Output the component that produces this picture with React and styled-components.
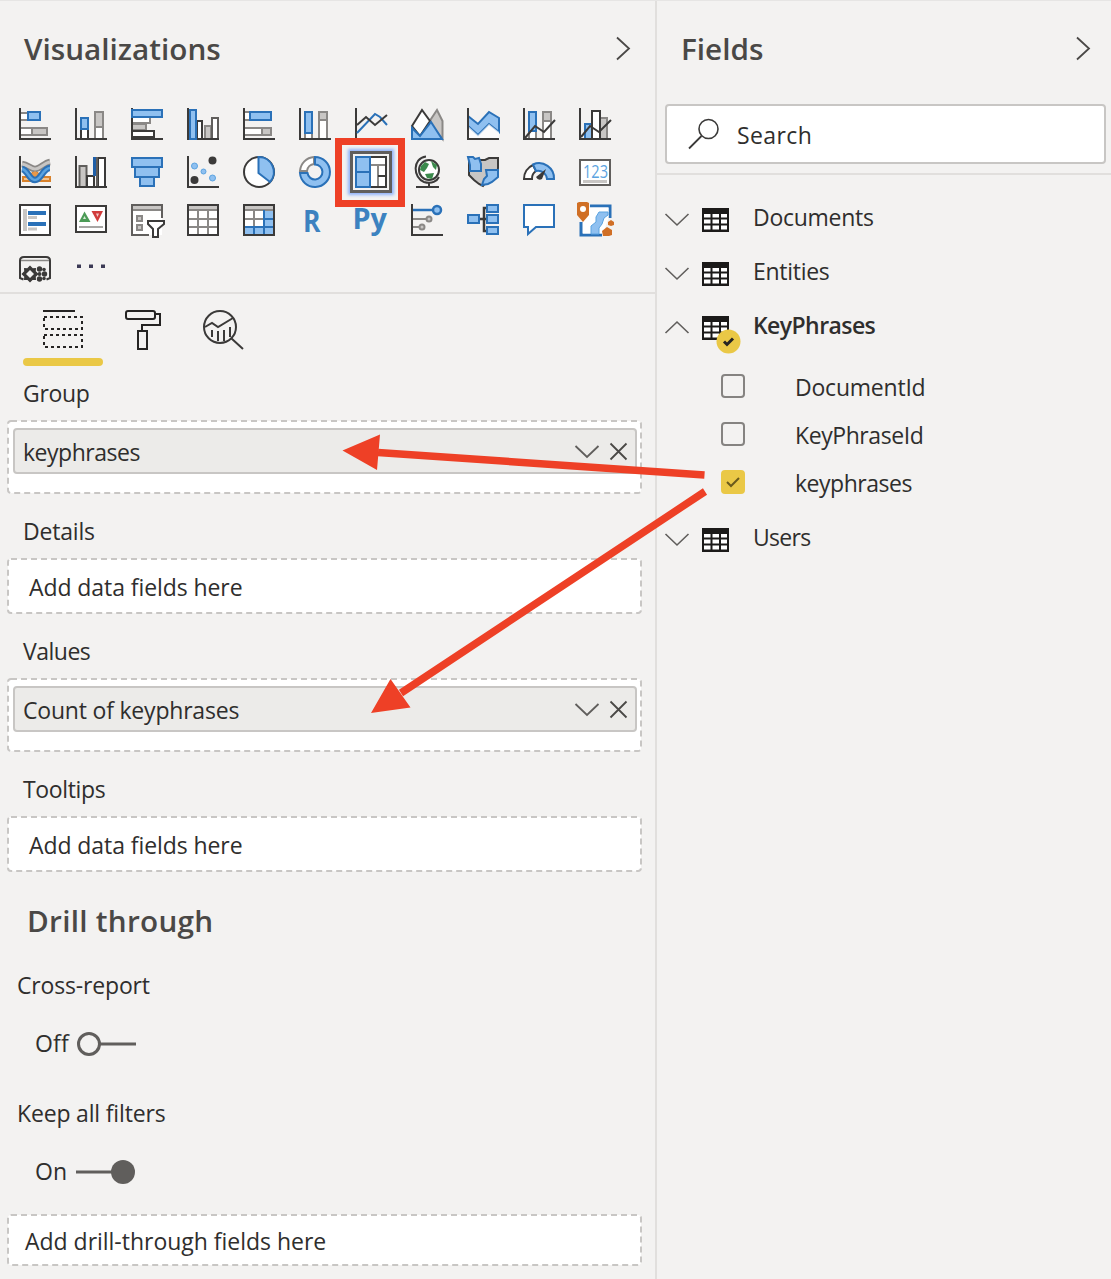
import React from "react";
import styled, { createGlobalStyle, css } from "styled-components";

const GlobalStyle = createGlobalStyle`
  * { box-sizing: border-box; }
  body { margin: 0; background: #f3f2f1; font-family: "Open Sans", "Noto Sans", sans-serif; color: #2f2e2d; }
`;

const Page = styled.div`
  position: relative;
  display: flex;
  width: 1111px;
  height: 1279px;
  overflow: hidden;
  background: #f3f2f1;
  border-top: 1px solid #e6e5e4;
`;
const VisualPanel = styled.section`
  width: 657px;
  margin-top: -1px;
  border-right: 2px solid #e1dfdd;
`;
const FieldPanel = styled.section`
  flex: 1;
  margin-top: -1px;
`;
const Header = styled.header`
  display: flex;
  align-items: center;
  justify-content: space-between;
  height: 98px;
  padding: 0 ${(p) => p.$right}px 0 24px;
`;
const Text = styled.span`
  font-size: 23px;
  line-height: 30px;
  white-space: nowrap;
  font-weight: ${(p) => (p.$bold ? 600 : 400)};
  letter-spacing: ${(p) => p.$ls || 0}px;
`;
const Title = styled.h2`
  margin: 0;
  font-size: 29.700px;
  line-height: 36px;
  font-weight: 600;
  color: #4a4846;
  white-space: nowrap;
  letter-spacing: ${(p) => p.$ls || 0}px;
`;
const Gallery = styled.div`
  display: grid;
  grid-template-columns: repeat(11, 32px);
  grid-auto-rows: 32px;
  gap: 16px 24px;
  padding: 10px 0 8px 19px;
  border-bottom: 2px solid #e1dfdd;
`;
const Cell = styled.div`
  position: relative;
  width: 32px;
  height: 32px;
`;
const IconSvg = styled.svg`
  display: block;
  flex: none;
  overflow: visible;
  fill: none;
`;
const SelectedFrame = styled.div`
  position: absolute;
  inset: -5px;
  border: 3px solid #605e5c;
  background: #f3f2f1;
  box-shadow: 0 0 3px 2px #8fb2fb;
`;
const Highlight = styled.div`
  position: absolute;
  left: -20px;
  top: -18px;
  width: 70px;
  height: 69px;
  border: 7px solid #ee4026;
`;
const Tabs = styled.nav`
  display: flex;
  height: 72px;
  padding-left: 23px;
`;
const Tab = styled.div`
  display: flex;
  justify-content: center;
  width: 80px;
  padding-top: 14px;
  position: relative;
  ${(p) => p.$active && css`
    &::after {
      content: "";
      position: absolute;
      left: 0; right: 0; bottom: 0;
      height: 8px;
      border-radius: 4px;
      background: #eac846;
    }
  `}
`;
const WellLabel = styled.div`
  display: flex;
  align-items: center;
  height: ${(p) => (p.$first ? 54 : 64)}px;
  padding: ${(p) => (p.$first ? 0 : 10)}px 0 0 23px;
`;
const Dashes = styled.rect`
  fill: #fff;
  stroke: #c8c6c4;
  stroke-width: 2;
  stroke-dasharray: 6 4;
`;
const Well = styled.div`
  position: relative;
  width: 635px;
  height: ${(p) => p.$h}px;
  margin-left: 7px;
  padding: ${(p) => (p.$filled ? "8px 5px 0 6px" : `2px 0 0 ${p.$indent}px`)};
  display: flex;
  align-items: ${(p) => (p.$filled ? "flex-start" : "center")};
`;
const WellBorder = styled.svg`
  position: absolute;
  inset: 0;
`;
const Pill = styled.div`
  position: relative;
  display: flex;
  align-items: center;
  flex: 1;
  height: 46px;
  padding: 1px 8px 0 8px;
  background: #ecebe9;
  border: 2px solid #c8c6c4;
  border-radius: 4px;
`;
const PillActions = styled.div`
  display: flex;
  align-items: center;
  gap: 11px;
  margin-left: auto;
`;
const Above = styled.div`
  position: relative;
  display: flex;
`;
const DrillHeading = styled.div`
  display: flex;
  align-items: center;
  height: 98px;
  padding-left: 27px;
`;
const OptionLabel = styled.div`
  display: flex;
  height: 30px;
  padding-left: 17px;
  margin-top: ${(p) => p.$gap || 0}px;
`;
const ToggleRow = styled.div`
  display: flex;
  align-items: center;
  height: 86px;
  padding-left: 35px;
`;
const ToggleText = styled.div`
  display: flex;
  width: 41px;
`;
const ToggleMark = styled.div`
  display: flex;
  padding-top: 1px;
`;
const SearchBox = styled.div`
  display: flex;
  align-items: center;
  height: 60px;
  margin: 6px 5px 9px 8px;
  padding-left: 20px;
  gap: 18px;
  background: #fff;
  border: 2px solid #c8c6c4;
  border-radius: 4px;
`;
const SearchText = styled.div`
  display: flex;
  padding-top: 2px;
`;
const Tree = styled.div`
  border-top: 2px solid #e1dfdd;
  padding-top: 15px;
`;
const TreeRow = styled.div`
  display: flex;
  align-items: center;
  height: 54px;
  padding-left: 8px;
`;
const TreeIcon = styled.div`
  position: relative;
  display: flex;
  width: 28px;
  margin: 6px 23px 0 13px;
`;
const Chev = styled.div`
  display: flex;
  padding-top: 4px;
`;
const Badge = styled.svg`
  position: absolute;
  left: 14px;
  top: 13px;
`;
const Children = styled.div`
  padding: 11px 0 3px;
`;
const ChildRow = styled.label`
  display: flex;
  align-items: center;
  height: 48px;
  padding-left: 64px;
`;
const Box = styled.span`
  display: flex;
  align-items: center;
  justify-content: center;
  width: 24px;
  height: 24px;
  margin: -2px 50px 0 0;
  border-radius: 4px;
  border: 2px solid ${(p) => (p.$on ? "#eac846" : "#858381")};
  background: ${(p) => (p.$on ? "#eac846" : "transparent")};
`;
const Arrows = styled.svg`
  position: absolute;
  left: 0;
  top: -1px;
  pointer-events: none;
`;

const D = "#3b3a39", G = "#8a8886", LG = "#c8c6c4", B = "#2a71b8", LB = "#8fc0f0", O = "#d8812a";
const R = ({ x, y, w, h, f = "#fff", s = D, sw = 2 }) => (
  <rect x={x} y={y} width={w} height={h} fill={f} stroke={s} strokeWidth={sw} />
);
const Axes = () => <path d="M1 0V31H32" stroke={D} strokeWidth="2" />;
const L = ({ d, s = D, w = 2, f = "none" }) => <path d={d} stroke={s} strokeWidth={w} fill={f} />;

const icons = [
  <><R x={1} y={5} w={8} h={7} s={G} /><R x={9} y={4} w={12} h={8} f={LB} s={B} /><R x={1} y={20} w={12} h={7} s={G} /><R x={13} y={20} w={15} h={7} f={LG} s={G} /><Axes /></>,
  <><R x={6} y={21} w={7} h={10} /><R x={6} y={10} w={7} h={11} f={LB} s={B} /><R x={20} y={18} w={8} h={13} s={G} /><R x={20} y={4} w={8} h={15} f={LG} s={G} /><Axes /></>,
  <><R x={1} y={9} w={18} h={6} s={G} /><R x={1} y={16} w={14} h={6} f={LG} s={G} /><R x={1} y={23} w={22} h={6} /><Axes /><R x={1} y={2} w={30} h={7} f={LB} s={B} /></>,
  <><R x={10} y={13} w={5} h={18} /><R x={18} y={18} w={6} h={13} f={LG} s={G} /><R x={25} y={10} w={6} h={21} s="#605e5c" /><Axes /><R x={3} y={2} w={6} h={29} f={LB} s={B} /></>,
  <><R x={1} y={4} w={7} h={8} s={G} /><R x={7} y={4} w={21} h={8} f={LB} s={B} /><R x={1} y={20} w={18} h={7} s={G} /><R x={19} y={20} w={9} h={7} f={LG} s={G} /><Axes /></>,
  <><R x={6} y={25} w={7} h={6} s={G} /><R x={6} y={4} w={7} h={21} f={LB} s={B} /><R x={20} y={12} w={8} h={19} s={G} /><R x={20} y={4} w={8} h={8} f={LG} s={G} /><Axes /></>,
  <><Axes /><L s={B} d="M2 25L20 6L25 9L32 17" /><L d="M2 17L11 9L20 17L32 7" /></>,
  <><L s={G} f={LG} d="M18 14L26 2L31.500 13V31L18 15Z" /><L f="#fff" d="M1 18L11 2L19 13L9 28Z" /><L s={B} f={LB} d="M1 20L9 28L20 14L31 31H1Z" /></>,
  <><L s={B} f={LB} d="M1 8L11 16L22 4L32 10V24L22 16L11 27L1 18Z" /><path d="M1 18L11 27L22 16L32 24V31H1Z" fill="#fff" opacity=".7" /><Axes /></>,
  <><R x={6} y={20} w={7} h={11} s={G} /><R x={6} y={4} w={7} h={19} f={LB} s={B} /><R x={20} y={13} w={8} h={18} s={G} /><R x={20} y={4} w={8} h={9} f={LG} s={G} /><L d="M2 30L12 18L21 24L32 12" /><Axes /></>,
  <><R x={6} y={16} w={7} h={15} f={LB} s={B} /><R x={21} y={10} w={7} h={21} f={LG} s={G} /><R x={13} y={3} w={8} h={28} /><L d="M2 29L11 18L20 24L32 12" /><Axes /></>,

  <><R x={4} y={21} w={27} h={4} f="#f3c28c" s={O} /><L s={O} f="#e8984a" d="M10 20L16 15L22 20" /><L s={G} w={6.5} d="M3 8C9 9 12 13 16 13C21 13 25 7 31 6" /><L s={LG} w={3} d="M3 8C9 9 12 13 16 13C21 13 25 7 31 6" /><path d="M12 18L16 15L20 18L16 21Z" fill="#e8984a" /><L s={B} w={6.5} d="M3 13C9 14 10 24 16 24C22 24 24 12 31 12" /><L s="#5ba3e0" w={2.5} d="M3 13C9 14 10 24 16 24C22 24 24 12 31 12" /><Axes /></>,
  <><R x={4.500} y={10} w={7} h={21} f={LG} s="#605e5c" /><R x={12} y={20} w={7} h={11} /><R x={23} y={2} w={7} h={29} f="#fff" /><R x={19} y={2} w={2} h={17} f={B} s="#1f5fa8" /><L d="M22 1V31" s="#605e5c" /><Axes /></>,
  <><R x={1} y={2} w={30} h={9} f={LB} s={B} /><R x={4} y={11} w={24} h={10} f={LB} s={B} /><R x={9} y={21} w={14} h={9} f={LB} s={B} /></>,
  <><Axes /><circle cx="7.500" cy="24" r="4" fill={D} /><circle cx="25.500" cy="4.500" r="4" fill={D} /><g fill={LB} stroke="#5ba3e0"><circle cx="7.500" cy="10" r="3" /><circle cx="16.500" cy="15.500" r="2.500" /><circle cx="25.500" cy="22" r="3" /></g></>,
  <><circle cx="16" cy="16" r="15" fill="#fff" stroke={D} strokeWidth="2" /><L s={B} f={LB} d="M15.500 1A15 15 0 0 1 27 26L15.500 17Z" /></>,
  <><L s={G} f="#fff" d="M15 1A15 15 0 0 0 1 15H8A8 8 0 0 1 15 8Z" /><L s={B} f={LB} d="M16 1A15 15 0 1 1 1 17H8.500A7.500 7.500 0 1 0 16 8.500Z" /></>,
  "treemap",
  <><circle cx="18" cy="14" r="10" fill="#fff" stroke={D} strokeWidth="2" /><path d="M10 10L14 6L18 8L16 12L13 16L9 14ZM20 5L26 9L25 14L22 11ZM14 18L23 17L21 23L16 22Z" fill="#3b8a4c" /><L d="M15 0.500C1 2 2 22 13 26C21 28.500 26 25 28 21M18 27V31M5 31H28" /></>,
  <><L f={LG} d="M2 10V19L7 24L12 28L16 30L19 26L24 25L30 20L31 12V2L22 2L18 4H8L2 3Z" /><L s={B} f={LB} d="M1 1H6L8 3L12 2L14 8V15H3V9Z" /><L s={B} f={LB} d="M19 14H31V21L25 26L21 28L15 29L17 23L20 20Z" /></>,
  <><L f="#fff" d="M1 23A15 15 0 0 1 10 9L13 15A9 9 0 0 0 9 23Z" /><L s={B} f={LB} d="M10 8.500A15 15 0 0 1 31 23H24A9 9 0 0 0 13 15Z" /><path d="M13 21L23 13L19 23Q15 25 13 21Z" fill={D} /></>,
  <><R x={1} y={4} w={30} h={25} s="#605e5c" /><path d="M4 24H28V27H4Z" fill={LG} /><text x="4" y="22" fontSize="18" textLength="25" lengthAdjust="spacingAndGlyphs" fill="#5ba3e0">123</text></>,

  <><R x={1} y={1} w={30} h={30} /><path d="M4 5H8V27H4Z" fill={LG} /><L s={B} w={4} d="M9 9H27M9 20H27" /><L s={LG} w={3} d="M9 13.500H18M9 25H18" /></>,
  <><R x={1} y={2} w={30} h={26} /><path d="M4 18L9.500 7.500L15.500 18Z" fill="#4c9b57" /><path d="M16.500 7H28L22.500 18Z" fill="#d13b3b" /><path d="M9.500 12L11 15H8Z" fill="#d8ecd8" /><path d="M21 9.500H24L22.500 13Z" fill="#f0c8c8" /><L s={G} w={1.5} d="M4 23H28" /></>,
  <><path d="M1 1H31V31H1Z" fill="#fff" /><L s="#605e5c" d="M31 14V1H1V31H18" /><L s={G} d="M2 6H30" /><path d="M2 2H30V5H2Z" fill={LG} /><R x={6} y={12} w={5} h={5} f={LG} s={G} /><R x={6} y={21} w={5} h={5} f={LG} s={G} /><L f="#fff" d="M17 17H33V20L27 25V33H22V25L17 20Z" /></>,
  <><R x={1} y={1} w={30} h={30} /><path d="M2 2H30V6H2Z" fill={LG} /><L s={G} d="M2 6H30M2 15H30M2 23H30M11 7V30M21 7V30" /></>,
  <><R x={1} y={1} w={30} h={30} /><path d="M2 2H30V6H2Z" fill={LG} /><path d="M21 6H31V31H1V23H21Z" fill={LB} /><L s={G} d="M2 6H30M2 15H20M11 7V22" /><L s={B} d="M21 6V31M21 15H31M2 23H31M11 23V31" /><L d="M1 1H31V31H1Z" /></>,
  <text x="4" y="28" fontSize="31" fontWeight="700" textLength="17.500" lengthAdjust="spacingAndGlyphs" fill="#3c82c0">R</text>,
  <text x="-2.500" y="24.500" fontSize="29" fontWeight="700" textLength="34.500" lengthAdjust="spacingAndGlyphs" fill="#3c82c0">Py</text>,
  <><Axes /><L s={B} w={2.5} d="M2 6H22" /><circle cx="26" cy="6" r="4" fill={LB} stroke={B} strokeWidth="2.500" /><L s={G} d="M2 15H15M2 23H9" /><circle cx="18" cy="15" r="2.500" fill={LG} stroke={G} strokeWidth="2" /><circle cx="11" cy="23" r="2.500" fill={LG} stroke={G} strokeWidth="2" /></>,
  <><L w={2.5} d="M12 15H20M20 4H17V27H20" /><R x={1} y={11} w={11} h={8} f={LB} s={B} /><R x={20} y={1} w={11} h={7} f={LB} s={B} /><R x={20} y={11} w={11} h={8} f={LB} s={B} /><R x={20} y={23} w={11} h={7} f={LB} s={B} /></>,
  <L s={B} f="#fff" d="M1 1H31V23H13L5 30V23H1Z" />,
  <><L s={B} w={3} f="#fff" d="M11 2H31V14M23 31H2V18" /><path d="M4 3.500H29.500V14L24 29.500H4Z" fill="#fff" /><path d="M20 8H29V11L25 14L23 20L20 24V30H12V22L17 18V13Z" fill={LB} stroke="#5ba3e0" /><path d="M-2 -1L0 -2H8L10 -1V11L4 18L-2 11Z" fill="#d06f25" /><circle cx="4" cy="5" r="3" fill="#fff" /><path d="M29 18L32 16L35 18V21L32 22L29 21Z" fill="#d06f25" /><path d="M23 27L28 23L33 26V31L30 32H24Z" fill="#d06f25" /></>,

  <><L d="M4.500 27.500L1 26V8.500Q1 5 5 5H27Q31 5 31 8.500V26L27.500 27.500" /><L w={1.5} s={G} d="M2 8.500H30" /><path d="M11 14.500L13.500 17L16.200 16.800L16 19.500L18.500 22L16 24.500L16.200 27.200L13.500 27L11 29.500L8.500 27L5.800 27.200L6 24.500L3.500 22L6 19.500L5.800 16.800L8.500 17Z" fill={D} stroke={D} strokeWidth="1.500" /><path d="M11 18L15 22L11 26L7 22Z" fill="#f3f2f1" /><g fill={D}><circle cx="20.500" cy="17" r="2.700" /><circle cx="25.500" cy="22" r="2.700" /><circle cx="20.500" cy="27" r="2.700" /><circle cx="25" cy="17.500" r="1.800" /><circle cx="25" cy="26.500" r="1.800" /><circle cx="20.500" cy="22" r="2" /></g></>,
  <path d="M2 12.500H6V16H2ZM14 12.500H18V16H14ZM26 12.500H30V16H26Z" fill="#3b3a55" />,
];

const Treemap = () => (
  <>
    <R x={1} y={1} w={30} h={30} />
    <path d="M16 9H23V30H16Z" fill="#fff" />
    <L s={G} d="M16 9H30M23 9V30" />
    <L d="M23 20H31M31 1V31H16" />
    <R x={1} y={1} w={14} h={15} f={LB} s={B} />
    <R x={1} y={16} w={14} h={15} f={LB} s={B} />
  </>
);

const Icon = ({ children, w = 32, h = 32 }) => (
  <IconSvg width={w} height={h} viewBox={`0 0 ${w} ${h}`}>{children}</IconSvg>
);
const ChevronRight = () => <Icon w={14} h={24}><L w={1.8} s="#4a4846" d="M1 0.500L13 11.500L1 22.500" /></Icon>;
const ChevronDown = () => <Icon w={24} h={13}><L w={1.6} s="#605e5c" d="M0.500 1L12 12L23.500 1" /></Icon>;
const ChevronUp = () => <Icon w={24} h={13}><L w={1.6} s="#605e5c" d="M0.500 12L12 1L23.500 12" /></Icon>;

const TableIcon = () => (
  <Icon w={27} h={24}>
    <path d="M0 0H27V24H0Z" fill="#1b1a19" />
    <path d="M2 6H8.500V9.500H2ZM10.500 6H17V9.500H10.500ZM19 6H25V9.500H19ZM2 11.500H8.500V15.500H2ZM10.500 11.500H17V15.500H10.500ZM19 11.500H25V15.500H19ZM2 17.500H8.500V21.500H2ZM10.500 17.500H17V21.500H10.500ZM19 17.500H25V21.500H19Z" fill="#fff" />
  </Icon>
);

const Border = ({ h }) => (
  <WellBorder width="635" height={h}><Dashes x="1" y="1" width="633" height={h - 2} rx="3" /></WellBorder>
);

const FilledWell = ({ label, ls }) => (
  <Well $filled $h={74}>
    <Border h={74} />
    <Pill>
      <Text $ls={ls}>{label}</Text>
      <PillActions>
        <Icon w={24} h={13}><L w={1.8} s="#605e5c" d="M0.500 1L12 12L23.500 1" /></Icon>
        <Icon w={17} h={17}><L w={1.8} s="#4a4846" d="M0.500 0.500L16.500 16.500M16.500 0.500L0.500 16.500" /></Icon>
      </PillActions>
    </Pill>
  </Well>
);
const EmptyWell = ({ label, ls, h = 56, indent = 22 }) => (
  <Well $h={h} $indent={indent}>
    <Border h={h} />
    <Above><Text $ls={ls}>{label}</Text></Above>
  </Well>
);

const TableRow = ({ name, ls, open }) => (
  <TreeRow>
    <Chev>{open ? <ChevronUp /> : <ChevronDown />}</Chev>
    <TreeIcon>
      <TableIcon />
      {open && (
        <Badge width="25" height="25">
          <circle cx="12.500" cy="12.500" r="12" fill="#eac846" />
          <path d="M8 12.500L11 15.500L17 9.500" fill="none" stroke="#252423" strokeWidth="3" />
        </Badge>
      )}
    </TreeIcon>
    <Text $bold={open} $ls={ls}>{name}</Text>
  </TreeRow>
);
const Field = ({ name, ls, on }) => (
  <ChildRow>
    <Box $on={on}>{on && <Icon w={14} h={10}><L w={2} s="#6b5a1c" d="M1 5L5 9L13 1" /></Icon>}</Box>
    <Text $ls={ls}>{name}</Text>
  </ChildRow>
);

export default function App() {
  return (
    <Page>
      <GlobalStyle />
      <VisualPanel>
        <Header $right={25}><Title>Visualizations</Title><ChevronRight /></Header>
        <Gallery>
          {icons.map((ic, i) => (
            <Cell key={i}>
              {ic === "treemap" ? (
                <>
                  <SelectedFrame />
                  <Above><Icon><Treemap /></Icon></Above>
                  <Highlight />
                </>
              ) : <Icon>{ic}</Icon>}
            </Cell>
          ))}
        </Gallery>
        <Tabs>
          <Tab $active>
            <Icon w={40} h={40}>
              <L s="#252423" d="M0 3H32" />
              <path d="M1 9H39V21H1ZM1 27H39V39H1Z" stroke="#252423" strokeWidth="2" strokeDasharray="3 3" />
            </Icon>
          </Tab>
          <Tab>
            <Icon w={36} h={42}>
              <rect x="1" y="3" width="29" height="8" rx="2" stroke="#252423" strokeWidth="2" />
              <L s="#252423" d="M30 6H35V17H17V23M13 23H22V41H13Z" />
            </Icon>
          </Tab>
          <Tab>
            <Icon w={42} h={42}>
              <circle cx="18" cy="19" r="16" stroke={D} strokeWidth="2" />
              <L d="M3 19L10 15L16 19L31 10M10 22V29M16 23V33M22 22V33M28 19V29M29 30L41 41" />
            </Icon>
          </Tab>
        </Tabs>
        <WellLabel $first><Text $ls={-0.3}>Group</Text></WellLabel>
        <FilledWell label="keyphrases" ls={-0.48} />
        <WellLabel><Text $ls={-0.18}>Details</Text></WellLabel>
        <EmptyWell label="Add data fields here" ls={-0.08} />
        <WellLabel><Text $ls={-0.5}>Values</Text></WellLabel>
        <FilledWell label="Count of keyphrases" ls={-0.2} />
        <WellLabel><Text $ls={-0.37}>Tooltips</Text></WellLabel>
        <EmptyWell label="Add data fields here" ls={-0.08} />
        <DrillHeading><Title $ls={0.28}>Drill through</Title></DrillHeading>
        <OptionLabel><Text $ls={-0.17}>Cross-report</Text></OptionLabel>
        <ToggleRow>
          <ToggleText><Text $ls={0.2}>Off</Text></ToggleText>
          <ToggleMark>
            <Icon w={60} h={24}><circle cx="13" cy="12" r="10.500" stroke="#605e5c" strokeWidth="3" /><L s="#605e5c" w={3} d="M24 12H60" /></Icon>
          </ToggleMark>
        </ToggleRow>
        <OptionLabel $gap={12}><Text $ls={-0.17}>Keep all filters</Text></OptionLabel>
        <ToggleRow>
          <ToggleText><Text>On</Text></ToggleText>
          <ToggleMark>
            <Icon w={60} h={24}><circle cx="47" cy="12" r="12" fill="#605e5c" /><L s="#605e5c" w={3} d="M0 12H36" /></Icon>
          </ToggleMark>
        </ToggleRow>
        <EmptyWell label="Add drill-through fields here" ls={-0.02} h={52} indent={18} />
      </VisualPanel>
      <FieldPanel>
        <Header $right={21}><Title>Fields</Title><ChevronRight /></Header>
        <SearchBox>
          <Icon w={32} h={32}><circle cx="21.500" cy="11" r="9.500" stroke="#3b3a39" strokeWidth="1.600" /><L w={1.8} d="M14.500 18L2 30.500" /></Icon>
          <SearchText><Text $ls={0.4}>Search</Text></SearchText>
        </SearchBox>
        <Tree>
          <TableRow name="Documents" ls={-0.28} />
          <TableRow name="Entities" ls={-0.28} />
          <TableRow name="KeyPhrases" ls={-0.57} open />
          <Children>
            <Field name="DocumentId" ls={-0.22} />
            <Field name="KeyPhraseId" ls={-0.43} />
            <Field name="keyphrases" ls={-0.48} on />
          </Children>
          <TableRow name="Users" ls={-0.7} />
        </Tree>
      </FieldPanel>
      <Arrows width="1111" height="1279">
        <path d="M378 452.500L704.500 475M401 693L705 491.500" stroke="#ee4026" strokeWidth="7.500" fill="none" />
        <path d="M342.500 450.500L380 434.500L377 470ZM371 713L390.500 679L410.500 707.500Z" fill="#ee4026" />
      </Arrows>
    </Page>
  );
}
